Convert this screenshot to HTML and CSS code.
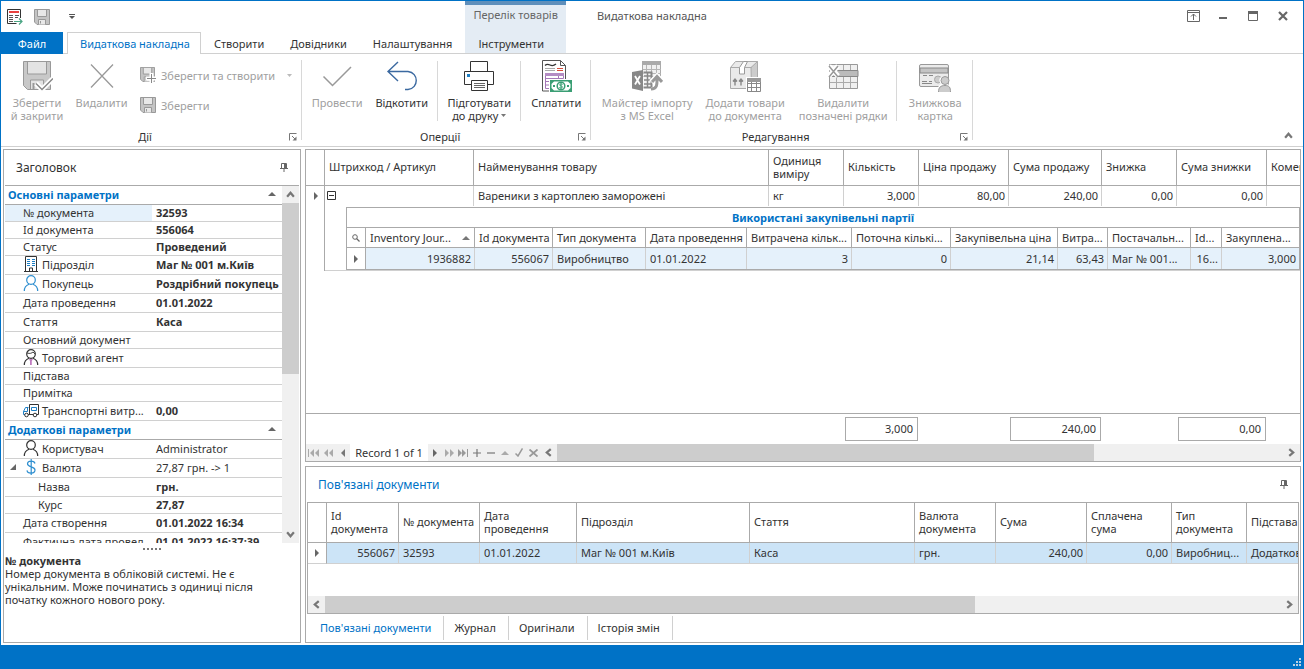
FILE: index.html
```html
<!DOCTYPE html>
<html lang="uk">
<head>
<meta charset="utf-8">
<title>Видаткова накладна</title>
<link rel="stylesheet" href="styles.css">
</head>
<body>
<svg class="sprite" aria-hidden="true">
  <symbol id="i-save" viewBox="0 0 32 32"><path d="M2.500 1.500h27v28h-23l-4-4z" fill="#c8c8c8" stroke="#999"/><path d="M6.500 2v12h19V2" fill="#e3e3e3" stroke="#999"/><path d="M9.500 29v-9h13v9" fill="#e3e3e3" stroke="#999"/><path d="M12.500 23v6" stroke="#999" stroke-width="2"/></symbol>
  <symbol id="i-save-sm" viewBox="0 0 16 16"><path d="M.5.500h15v15H3L.5 13z" fill="#c4c4c4" stroke="#999"/><path d="M3.500 1v6.500h9V1" fill="#e8e8e8" stroke="#999"/><path d="M4.500 15.500v-5h7v5" fill="#e8e8e8" stroke="#999"/><path d="M6.500 12v2.500" stroke="#999"/></symbol>
  <symbol id="i-pin" viewBox="0 0 8 9"><path d="M1.500 5V.5h5V5M0 5.500h8M4 6v3" fill="none" stroke="#666"/><path d="M4 0h2v5H4z" fill="#666"/></symbol>
  <symbol id="i-launch" viewBox="0 0 8 8"><path d="M.5 7.500v-7h7" fill="none" stroke="#777"/><path d="M3 3l3 3" stroke="#777"/><path d="M7.500 3.500v4h-4z" fill="#777"/></symbol>
  <symbol id="i-chev" viewBox="0 0 8 8"><path d="M1 6l3-3.500L7 6" fill="none" stroke="#777" stroke-width="2"/></symbol>
  <symbol id="i-up" viewBox="0 0 8 4"><path d="M0 4l4-4 4 4z" fill="currentColor"/></symbol>
  <symbol id="i-row" viewBox="0 0 4 8"><path d="M0 0l4 4-4 4z" fill="#666"/></symbol>
  <symbol id="i-user" viewBox="0 0 16 16"><circle cx="8" cy="5" r="4.300" fill="none" stroke="currentColor" stroke-width="1.200"/><path d="M1.300 16c0-4.300 2-5.800 4.700-6.800M14.700 16c0-4.300-2-5.800-4.700-6.800" fill="none" stroke="currentColor" stroke-width="1.200"/></symbol>
</svg>

<div class="window">
  <header class="header">
    <div class="quick">
      <button class="q-btn" aria-label="Форма"><svg width="16" height="16" viewBox="0 0 16 16"><path d="M13.500 9V.5H.5v14h9" fill="#fff" stroke="#333"/><path d="M2 2h10v2H2z" fill="#e8423f"/><path d="M2 6.500h4M8 6.500h4M2 8.500h4M8 8.500h3M2 10.500h4M2 12.500h4" stroke="#555"/><path d="M7 12.500h8M12 9.500l3 3-3 3" fill="none" stroke="#4aa583" stroke-width="1.200"/></svg></button>
      <button class="q-btn q-save" aria-label="Зберегти"><svg width="16" height="16"><use href="#i-save-sm"/></svg></button>
      <button class="q-btn q-more" aria-label="Налаштувати панель"><svg width="6" height="5" viewBox="0 0 6 5"><path d="M0 .5h6" stroke="#555"/><path d="M0 2h6L3 5z" fill="#555"/></svg></button>
    </div>
    <div class="ctx-title">Перелік товарів</div>
    <div class="title-right">
      <h1 class="title">Видаткова накладна</h1>
      <div class="win-btns">
        <button aria-label="Параметри стрічки"><svg width="13" height="12" viewBox="0 0 13 12"><path d="M.5.500h12v11H.5zM0 2.500h13M6.500 10V4M4 6.500L6.500 4 9 6.500" fill="none" stroke="#666"/></svg></button>
        <button aria-label="Згорнути"><svg width="8" height="12" viewBox="0 0 8 12"><path d="M0 8h8" stroke="#666" stroke-width="2"/></svg></button>
        <button aria-label="Розгорнути"><svg width="10" height="10" viewBox="0 0 10 10"><path d="M.5.500h9v9h-9z" fill="none" stroke="#666"/><path d="M0 0h10v3H0z" fill="#666"/></svg></button>
        <button aria-label="Закрити"><svg width="10" height="10" viewBox="0 0 10 10"><path d="M1 1l8 8M9 1L1 9" stroke="#666" stroke-width="2.200"/></svg></button>
      </div>
    </div>
    <nav class="tabs">
      <button class="tab tab-file">Файл</button>
      <button class="tab tab-active">Видаткова накладна</button>
      <button class="tab">Створити</button>
      <button class="tab">Довідники</button>
      <button class="tab">Налаштування</button>
    </nav>
    <div class="ctx-tab"><button class="tab">Інструменти</button></div>
    <div class="tabs-rest"></div>
  </header>

  <section class="ribbon">
    <div class="group">
      <div class="group-body group-actions">
        <button class="big w64" disabled><svg width="32" height="32" viewBox="0 0 32 32"><use href="#i-save" width="32" height="32"/><path d="M15 23.500l6 6L32 18.500" fill="none" stroke="#fff" stroke-width="5"/><path d="M15 23.500l6 6L32 18.500" fill="none" stroke="#888" stroke-width="1.500"/></svg><span>Зберегти<br>й закрити</span></button>
        <button class="big w65" disabled><svg width="32" height="32" viewBox="0 0 32 32"><path d="M5 4.500l22 23M27 4.500l-22 23" stroke="#999" stroke-width="1.300"/></svg><span>Видалити</span></button>
        <div class="small-col">
          <button class="small" disabled><svg width="16" height="16" viewBox="0 0 16 16"><use href="#i-save-sm" width="15" height="15"/><path d="M11.500 6v10M6 11.500h10" stroke="#fff" stroke-width="4"/><path d="M11.500 7v9M7 11.500h9" stroke="#888"/></svg><span>Зберегти та створити</span><svg class="drop" width="5" height="3" viewBox="0 0 5 3"><path d="M0 0h5L2.500 3z" fill="#bbb"/></svg></button>
          <button class="small" disabled><svg width="16" height="16"><use href="#i-save-sm"/></svg><span>Зберегти</span></button>
        </div>
      </div>
      <div class="group-foot"><span>Дії</span><button class="launch" aria-label="Дії: параметри"><svg width="8" height="8"><use href="#i-launch"/></svg></button></div>
    </div>

    <div class="group">
      <div class="group-body">
        <button class="big w64" disabled><svg width="32" height="32" viewBox="0 0 32 32"><path d="M2.500 16.500l9 9L30 7" fill="none" stroke="#999" stroke-width="1.500"/></svg><span>Провести</span></button>
        <button class="big w65"><svg width="32" height="32" viewBox="0 0 32 32"><path d="M12 2L2 11.500 12 21M2 11.500h20c11 1 11 17 0 18h-3" fill="none" stroke="#3b69a0" stroke-width="1.400"/></svg><span>Відкотити</span></button>
        <i class="sep"></i>
        <button class="big w76"><svg width="32" height="32" viewBox="0 0 32 32"><g fill="#fff" stroke="#333"><path d="M7.500 12V1.500h17V12"/><path d="M1.500 11.500h29v13h-29z"/><path d="M8.500 20.500h16v10h-16z"/></g><path d="M11 23.500h11M11 25.500h11M11 27.500h11" stroke="#666"/><path d="M4 14h3v3H4z" fill="#1e7fc4"/></svg><span>Підготувати<br>до друку <svg width="5" height="3" viewBox="0 0 5 3"><path d="M0 0h5L2.500 3z" fill="#777"/></svg></span></button>
        <i class="sep"></i>
        <button class="big w64"><svg width="32" height="32" viewBox="0 0 32 32"><path d="M2.500.500h18l5 5V31H2.500z" fill="#fff" stroke="#555"/><path d="M20.500.500v5h5" fill="none" stroke="#555"/><path d="M5 5.500q2-2 5-.5t6-1" fill="none" stroke="#333" stroke-width="1.300"/><path d="M5 8.500h10M5 10.500h10" stroke="#aaa"/><path d="M17 8.500h6M17 10.500h6" stroke="#d94b3c"/><path d="M5.500 14v14.500h4M5 18.500h18.500v-4M18.500 15v3.500" fill="none" stroke="#a678b8"/><path d="M5 13h19v3H5z" fill="#b48cc4"/><path d="M6 21.500h4M6 25h4" stroke="#a678b8"/><path d="M9 19h23v13H9z" fill="#fff"/><path d="M10 20h22v12H10z" fill="#3a9e74"/><path d="M14 21.500h14l2.500 2.500v4L28 30.500H14L11.500 28v-4z" fill="#fff"/><circle cx="21" cy="26" r="3.800" fill="#fff" stroke="#3a9e74" stroke-width="1.500"/><path d="M22.500 24.500c-1-.8-3-.5-3 .5s3 .8 3 1.900-2 1.500-3.200.6M21 23v6" fill="none" stroke="#3a9e74"/><path d="M13 25h2v2h-2zM27 25h2v2h-2z" fill="#3a9e74"/></svg><span>Сплатити</span></button>
      </div>
      <div class="group-foot"><span>Оперції</span><button class="launch" aria-label="Операції: параметри"><svg width="8" height="8"><use href="#i-launch"/></svg></button></div>
    </div>

    <div class="group">
      <div class="group-body group-edit">
        <button class="big w100" disabled><svg width="32" height="32" viewBox="0 0 32 32"><path d="M11.500 1.500h18v15h-18z" fill="#f0f0f0" stroke="#aaa"/><path d="M11 1h19v4H11z" fill="#aaa"/><path d="M15.500 5v11M20.500 5v11M25.500 5v11M12 9.500h18M12 13.500h18" stroke="#b5b5b5"/><path d="M1 12l11-2v21L1 28.500z" fill="#888"/><path d="M4 16l5 8.500M9 16l-5 8.500" stroke="#fff" stroke-width="1.800"/><path d="M12.500 12.500h8v15h-8" fill="#f4f4f4" stroke="#888" stroke-width="2"/><path d="M13 16h7M13 20h7M13 24h7M16.500 13v14" stroke="#888" stroke-width="1.500"/><path d="M20 30c6 0 6-5 6-13M20 22l6-6 6 6" fill="none" stroke="#fff" stroke-width="5"/><path d="M20 29c7 0 6-6 6-12M21 22l5-5.500 5 5.500" fill="none" stroke="#999" stroke-width="3"/></svg><span>Майстер імпорту<br>з MS Excel</span></button>
        <button class="big w96" disabled><svg width="32" height="32" viewBox="0 0 32 32"><path d="M1.500 7.500l5-6h22v20l-6 7h-21z" fill="#eaeaea" stroke="#aaa"/><path d="M22 7.500l6.500-6v20l-6 7z" fill="#ccc" stroke="#aaa"/><path d="M1.500 7.500h21" stroke="#aaa"/><path d="M10.500 14V7.500l4-6h4l-3 6V14z" fill="#fff" stroke="#999"/><path d="M6 25.500v-6M4 21.500l2-2.500 2 2.500M12 25.500v-6M10 21.500l2-2.500 2 2.500" fill="none" stroke="#888" stroke-width="1.400"/><path d="M17 17h15v15H17z" fill="#fff"/><path d="M18.500 18.500h13v13h-13zM19 23.500h12M19 27.500h12M22.500 22v9M27.500 22v9" fill="#fff" stroke="#888"/><path d="M18 18h14v4H18z" fill="#999"/></svg><span>Додати товари<br>до документа</span></button>
        <button class="big w100" disabled><svg width="32" height="32" viewBox="0 0 32 32"><path d="M2.500 4.500h28v24h-28z" fill="#f0f0f0" stroke="#999"/><path d="M9.500 5v23M16.500 5v23M23.500 5v23M3 22.500h27" stroke="#aaa"/><path d="M3 10.500h28v6H3z" fill="#bbb" stroke="#888"/><path d="M2 6l9 10M11 6L2 16" stroke="#fff" stroke-width="5"/><path d="M2 6l9 11M11 6L2 17" stroke="#999" stroke-width="1.500"/></svg><span>Видалити<br>позначені рядки</span></button>
        <i class="sep"></i>
        <button class="big w70" disabled><svg width="32" height="32" viewBox="0 0 32 32"><rect x=".5" y="4.500" width="29" height="22" rx="1.500" fill="#ebebeb" stroke="#999"/><path d="M1 8h28v5H1z" fill="#c4c4c4" stroke="#888"/><path d="M4 15.500h4M10 15.500h4M3 21.500h5M3 23.500h10M10 21.500h3" stroke="#888"/><circle cx="19" cy="19.500" r="3.500" fill="#ccc" stroke="#aaa"/><path d="M18 32c0-6 4-8 4-8-5-6 3-11 7-5 1 3 0 5 0 5s3 2 3 8z" fill="#fff"/><circle cx="26" cy="20.500" r="4" fill="#ccc" stroke="#999"/><path d="M19.500 32c0-4.500 2-6.500 6.500-6.500s5.500 2 5.500 6.500" fill="#ccc" stroke="#999"/></svg><span>Знижкова<br>картка</span></button>
      </div>
      <div class="group-foot"><span>Редагування</span><button class="launch" aria-label="Редагування: параметри"><svg width="8" height="8"><use href="#i-launch"/></svg></button></div>
    </div>
    <button class="collapse" aria-label="Згорнути стрічку"><svg width="9" height="9"><use href="#i-chev"/></svg></button>
  </section>

  <main class="work">
    <aside class="panel props">
      <div class="panel-head"><h2>Заголовок</h2><button class="pin" aria-label="Закріпити"><svg width="8" height="9"><use href="#i-pin"/></svg></button></div>
      <div class="props-body">
        <div class="props-list">
          <table class="ptable">
            <colgroup><col class="c-name"><col></colgroup>
            <tr class="cat"><th colspan="2"><div>Основні параметри<svg width="8" height="4"><use href="#i-up"/></svg></div></th></tr>
            <tr class="r17 sel"><th>№ документа</th><td>32593</td></tr>
            <tr class="r17"><th>Id документа</th><td>556064</td></tr>
            <tr class="r17"><th>Статус</th><td>Проведений</td></tr>
            <tr><th><div><svg width="16" height="16" viewBox="0 0 16 16"><path d="M2.500.500h11v15h-11zM1 15.500h14M6.500 15v-3h3v3" fill="none" stroke="#333"/><path d="M4 3.500h3M9 3.500h3M4 5.500h3M9 5.500h3M4 7.500h3M9 7.500h3M4 9.500h3M9 9.500h3" stroke="#1e7fc4"/></svg>Підрозділ</div></th><td>Маг № 001 м.Київ</td></tr>
            <tr><th><div><svg class="blue" width="16" height="16"><use href="#i-user"/></svg>Покупець</div></th><td>Роздрібний покупець</td></tr>
            <tr><th>Дата проведення</th><td>01.01.2022</td></tr>
            <tr><th>Стаття</th><td>Каса</td></tr>
            <tr class="r17"><th>Основний документ</th><td></td></tr>
            <tr><th><div><svg width="16" height="16" viewBox="0 0 16 16"><use href="#i-user" width="16" height="16"/><path d="M4 4c3 1 5 0 6-1l2 2" fill="none" stroke="#444"/><path d="M6 10h4l-1.200 2v4H7v-4z" fill="#c07cc0"/></svg>Торговий агент</div></th><td></td></tr>
            <tr class="r17"><th>Підстава</th><td></td></tr>
            <tr class="r17"><th>Примітка</th><td></td></tr>
            <tr><th><div><svg width="16" height="16" viewBox="0 0 16 16"><path d="M6.500 12V2.500h9v10h-2" fill="none" stroke="#333"/><path d="M5.500 5.500h-3l-2 4v3h2M.5 9.500h4v-4M8.500 5.500h5v3h-5z" fill="none" stroke="#1e7fc4"/><path d="M5 12.500h5" stroke="#333"/><circle cx="3.500" cy="13" r="1.800" fill="#fff" stroke="#333"/><circle cx="12" cy="13" r="1.800" fill="#fff" stroke="#333"/></svg>Транспортні витр...</div></th><td>0,00</td></tr>
            <tr class="cat"><th colspan="2"><div>Додаткові параметри<svg width="8" height="4"><use href="#i-up"/></svg></div></th></tr>
            <tr><th><div><svg width="16" height="16"><use href="#i-user"/></svg>Користувач</div></th><td class="plain">Administrator</td></tr>
            <tr class="tree"><th><div><svg width="6" height="6" viewBox="0 0 6 6"><path d="M6 0v6H0z" fill="#666"/></svg><svg width="16" height="16" viewBox="0 0 16 16"><path d="M12 4.500C11 1 4.500 1.500 4.500 4.800c0 4 7.500 2 7.500 6.200 0 4-7.500 4-8 .3M8.200 0v16" fill="none" stroke="#2f8fd0" stroke-width="1.200"/></svg>Валюта</div></th><td class="plain">27,87 грн. -&gt; 1</td></tr>
            <tr class="child"><th>Назва</th><td>грн.</td></tr>
            <tr class="r17 child"><th>Курс</th><td>27,87</td></tr>
            <tr><th>Дата створення</th><td>01.01.2022 16:34</td></tr>
            <tr><th>Фактична дата провед...</th><td>01.01.2022 16:37:39</td></tr>
          </table>
        </div>
        <div class="vscroll"><svg width="9" height="9"><use href="#i-chev"/></svg><i></i><svg class="down" width="9" height="9"><use href="#i-chev"/></svg></div>
      </div>
      <div class="splitter"><i></i><i></i><i></i><i></i><i></i></div>
      <div class="hint"><b>№ документа</b><p>Номер документа в обліковій системі. Не є унікальним. Може починатись з одиниці після початку кожного нового року.</p></div>
    </aside>

    <div class="right">
      <section class="panel goods">
        <div class="goods-body">
          <table class="grid main-grid">
            <colgroup><col class="w19"><col class="w149"><col class="w295"><col class="w75"><col class="w75"><col class="w90"><col class="w93"><col class="w75"><col class="w90"><col></colgroup>
            <thead><tr><th></th><th>Штрихкод / Артикул</th><th>Найменування товару</th><th>Одиниця виміру</th><th>Кількість</th><th>Ціна продажу</th><th>Сума продажу</th><th>Знижка</th><th>Сума знижки</th><th>Коментар</th></tr></thead>
            <tbody>
              <tr><td rowspan="2" class="ind"><svg width="4" height="8"><use href="#i-row"/></svg></td><td class="exp"><button aria-label="Згорнути рядок"><svg width="9" height="9" viewBox="0 0 9 9"><path d="M.5.500h8v8h-8zM2 4.500h5" fill="none" stroke="#333"/></svg></button></td><td>Вареники з картоплею заморожені</td><td>кг</td><td class="num">3,000</td><td class="num">80,00</td><td class="num">240,00</td><td class="num">0,00</td><td class="num">0,00</td><td></td></tr>
              <tr><td colspan="9" class="nest">
                <table class="grid sub-grid">
                  <caption>Використані закупівельні партії</caption>
                  <colgroup><col class="w19"><col class="w109"><col class="w78"><col class="w93"><col class="w101"><col class="w105"><col class="w99"><col class="w107"><col class="w50"><col class="w83"><col class="w31"><col></colgroup>
                  <thead><tr><th class="center"><svg width="8" height="8" viewBox="0 0 8 8"><circle cx="3" cy="3" r="2.300" fill="none" stroke="#666"/><path d="M4.500 4.500l3 3" stroke="#666" stroke-width="1.300"/></svg></th><th><div class="sort">Inventory Jour...<svg width="8" height="4"><use href="#i-up"/></svg></div></th><th>Id документа</th><th>Тип документа</th><th>Дата проведення</th><th>Витрачена кільк...</th><th>Поточна кількі...</th><th>Закупівельна ціна</th><th>Витра...</th><th>Постачальн...</th><th>Id...</th><th>Закуплена...</th></tr></thead>
                  <tbody><tr><td class="center"><svg width="4" height="8"><use href="#i-row"/></svg></td><td class="num">1936882</td><td class="num">556067</td><td>Виробництво</td><td>01.01.2022</td><td class="num">3</td><td class="num">0</td><td class="num">21,14</td><td class="num">63,43</td><td>Маг № 001...</td><td class="num">16...</td><td class="num">3,000</td></tr></tbody>
                </table>
              </td></tr>
            </tbody>
          </table>
        </div>
        <div class="totals"><output class="t-qty">3,000</output><output class="t-sum">240,00</output><output class="t-disc">0,00</output></div>
        <div class="nav">
          <div class="nav-l">
            <button aria-label="Перший"><svg width="11" height="8" viewBox="0 0 11 8"><path d="M.5 0v8" stroke="#aaa"/><path d="M6 0v8L2 4zM11 0v8L7 4z" fill="#aaa"/></svg></button>
            <button aria-label="Попередня сторінка"><svg width="9" height="8" viewBox="0 0 9 8"><path d="M4 0v8L0 4zM9 0v8L5 4z" fill="#aaa"/></svg></button>
            <button aria-label="Попередній"><svg width="4" height="8" viewBox="0 0 4 8"><path d="M4 0v8L0 4z" fill="#777"/></svg></button>
          </div>
          <span class="rec">Record 1 of 1</span>
          <div class="nav-r">
            <button aria-label="Наступний"><svg width="4" height="8"><use href="#i-row"/></svg></button>
            <button aria-label="Наступна сторінка"><svg width="9" height="8" viewBox="0 0 9 8"><path d="M0 0v8l4-4zM5 0v8l4-4z" fill="#aaa"/></svg></button>
            <button aria-label="Останній"><svg width="10" height="8" viewBox="0 0 10 8"><path d="M9.500 0v8" stroke="#999"/><path d="M0 0v8l4-4zM4 0v8l4-4z" fill="#999"/></svg></button>
            <button aria-label="Додати"><svg width="8" height="8" viewBox="0 0 8 8"><path d="M0 4h8M4 0v8" stroke="#777" stroke-width="1.200"/></svg></button>
            <button aria-label="Вилучити"><svg width="8" height="8" viewBox="0 0 8 8"><path d="M0 4h8" stroke="#777" stroke-width="1.200"/></svg></button>
            <button class="dim" aria-label="Редагувати"><svg width="8" height="4"><use href="#i-up"/></svg></button>
            <button aria-label="Підтвердити"><svg width="8" height="9" viewBox="0 0 8 9"><path d="M.5 5.500L3 8l4.500-7.500" fill="none" stroke="#999" stroke-width="1.500"/></svg></button>
            <button aria-label="Скасувати"><svg width="9" height="8" viewBox="0 0 9 8"><path d="M.5.500l8 7M8.500.500l-8 7" stroke="#999" stroke-width="1.800"/></svg></button>
          </div>
          <div class="hscroll top-scroll"><svg class="left" width="9" height="9"><use href="#i-chev"/></svg><span class="track"><i></i></span><svg class="rt" width="9" height="9"><use href="#i-chev"/></svg></div>
        </div>
      </section>

      <section class="panel linked">
        <div class="panel-head linked-head"><h2>Пов'язані документи</h2><button class="pin" aria-label="Закріпити"><svg width="8" height="9"><use href="#i-pin"/></svg></button></div>
        <div class="linked-box">
          <div class="linked-body">
            <table class="grid linked-grid">
              <colgroup><col class="w19"><col class="w72"><col class="w81"><col class="w97"><col class="w173"><col class="w165"><col class="w81"><col class="w91"><col class="w85"><col class="w75"><col></colgroup>
              <thead><tr><th></th><th>Id документа</th><th>№ документа</th><th>Дата проведення</th><th>Підрозділ</th><th>Стаття</th><th>Валюта документа</th><th>Сума</th><th>Сплачена сума</th><th>Тип документа</th><th>Підстава</th></tr></thead>
              <tbody><tr><td class="center"><svg width="4" height="8"><use href="#i-row"/></svg></td><td class="num">556067</td><td>32593</td><td>01.01.2022</td><td>Маг № 001 м.Київ</td><td>Каса</td><td>грн.</td><td class="num">240,00</td><td class="num">0,00</td><td>Виробниц...</td><td>Додаткові</td></tr></tbody>
            </table>
          </div>
          <div class="hscroll low-scroll"><svg class="left" width="9" height="9"><use href="#i-chev"/></svg><span class="track"><i></i></span><svg class="rt" width="9" height="9"><use href="#i-chev"/></svg></div>
        </div>
        <nav class="btabs"><button class="on">Пов'язані документи</button><button>Журнал</button><button>Оригінали</button><button>Історія змін</button></nav>
      </section>
    </div>
  </main>

  <footer class="status"><svg width="8" height="8" viewBox="0 0 8 8"><path d="M6 0h2v2H6zM3 3h2v2H3zM6 3h2v2H6zM0 6h2v2H0zM3 6h2v2H3zM6 6h2v2H6z" fill="#b9cfe4"/></svg></footer>
</div>
</body>
</html>
```

FILE: styles.css
```css
* { box-sizing: border-box; }
html, body { height: 100%; margin: 0; }
body { font: 11px/13px "Noto Sans", "Open Sans", sans-serif; color: #333; background: #fff; overflow: hidden; }
h1, h2, p { margin: 0; font-weight: 400; }
button { font: inherit; color: inherit; background: none; border: 0; padding: 0; margin: 0; }
svg { flex: none; }
.sprite { display: none; }

.window { height: 100vh; display: flex; flex-direction: column; border: 1px solid #0072c6; border-bottom: 0; }

/* header */
.header { display: grid; grid-template-columns: auto auto 1fr; grid-template-rows: 31px 22px; }
.quick { display: flex; align-items: center; padding-left: 6px; }
.q-btn { display: flex; }
.q-save { margin-left: 11px; }
.q-more { margin-left: 19px; }
.ctx-title { background: #e4ecf4; border-top: 4px solid #5f8fbb; padding: 3px 8px 0; color: #666; white-space: nowrap; }
.title-right { display: flex; align-items: center; justify-content: space-between; padding: 0 5px 2px 31px; }
.title { font-size: 11px; color: #555; }
.win-btns { display: flex; }
.win-btns button { width: 30px; height: 29px; display: flex; align-items: center; justify-content: center; }
.tabs { display: flex; border-bottom: 1px solid #d0d0d0; }
.tab { padding: 2px 13px 0; white-space: nowrap; }
.tab-file { background: #0072c6; color: #fff; width: 62px; margin: 0 4px -1px 0; padding-top: 0; }
.tab-active { color: #0072c6; background: #fff; border: 1px solid #d0d0d0; border-bottom: 0; padding: 0 10px 0 12px; margin-bottom: -1px; }
.ctx-tab { background: #e4ecf4; border-bottom: 1px solid #d0d0d0; display: flex; }
.tabs-rest { border-bottom: 1px solid #d0d0d0; }

/* ribbon */
.ribbon { display: flex; height: 93px; border-bottom: 1px solid #d0d0d0; }
.group { display: flex; flex-direction: column; justify-content: space-between; margin: 6px 0; border-right: 1px solid #d8d8d8; }
.group-body { display: flex; padding: 0 2px 0 3px; }
.group-actions { padding: 0 2px 0 4px; }
.group-edit { padding: 0 2px 0 6px; }
.big { display: flex; flex-direction: column; align-items: center; line-height: 13px; gap: 4px; white-space: nowrap; }
.big:disabled, .small:disabled { color: #a0a0a0; }
.big span svg { vertical-align: 3px; }
.sep { width: 1px; height: 60px; margin: 1px 3px 0; background: #d8d8d8; }
.w64 { width: 64px; } .w65 { width: 65px; } .w70 { width: 70px; } .w76 { width: 76px; } .w96 { width: 96px; } .w100 { width: 100px; }
.small-col { display: flex; flex-direction: column; gap: 14px; padding: 7px 7px 0 6px; }
.small { display: flex; align-items: center; gap: 5px; height: 16px; white-space: nowrap; }
.drop { margin-left: 7px; }
.group-foot { display: flex; align-items: center; height: 7px; padding: 0 4px 0 0; text-align: center; }
.group-foot span { flex: 1; }
.launch { display: flex; }
.collapse { margin: auto 10px 6px auto; display: flex; }

/* work area */
.work { flex: 1; min-height: 0; display: flex; gap: 4px; padding: 2px; }
.panel { border: 1px solid #aaa; }
.props { width: 298px; flex: none; display: flex; flex-direction: column; }
.panel-head { display: flex; align-items: center; justify-content: space-between; height: 35px; padding: 0 12px; }
.panel-head h2 { font-size: 12px; }
.pin { display: flex; }
.props-body { flex: 1; min-height: 0; display: flex; margin: 0 1px; border-top: 1px solid #aaa; }
.props-list { flex: 1; overflow: hidden; }
.ptable { width: 100%; table-layout: fixed; border-collapse: separate; border-spacing: 0; }
.c-name { width: 147px; }
.ptable tr { height: 19px; }
.ptable .r17 { height: 17px; }
.ptable th, .ptable td { padding: 0 0 2px 18px; text-align: left; font-weight: 400; border-bottom: 1px solid #d0d0d0; white-space: nowrap; overflow: hidden; line-height: 13px; }
.ptable td { padding-left: 4px; font-weight: 700; }
.ptable td.plain { font-weight: 400; }
.ptable th div { display: flex; align-items: center; gap: 3px; height: 16px; }
.ptable .cat th { padding: 0 6px 2px 3px; color: #0072c6; font-weight: 700; border-color: #aaa; }
.cat div { justify-content: space-between; }
.cat svg { color: #666; }
.ptable .sel th { background: #e5f1fb; }
.ptable .tree th { padding-left: 5px; }
.ptable .tree th div svg + svg { margin-left: 4px; }
.ptable .child th { padding-left: 33px; }
.blue { color: #2f8fd0; }
.vscroll { width: 17px; background: #f0f0f0; display: flex; flex-direction: column; align-items: center; padding: 4px 0; gap: 4px; }
.vscroll i { width: 17px; flex: 0 0 49%; background: #cdcdcd; }
.vscroll .down { margin-top: auto; transform: rotate(180deg); }
.splitter { display: flex; justify-content: center; align-items: center; gap: 2px; height: 11px; }
.splitter i { width: 2px; height: 2px; background: #777; }
.hint { height: 88px; padding: 0 20px 0 1px; }

.right { flex: 1; min-width: 0; display: flex; flex-direction: column; gap: 4px; }
.goods { flex: 1; display: flex; flex-direction: column; min-height: 0; }
.goods-body { flex: 1; overflow: hidden; }
.grid { width: 100%; table-layout: fixed; border-collapse: separate; border-spacing: 0; }
.grid th, .grid td { padding: 0 4px 2px; text-align: left; font-weight: 400; overflow: hidden; border-right: 1px solid #aaa; white-space: nowrap; line-height: 13px; }
.grid th { border-bottom: 1px solid #aaa; }
.main-grid > thead th, .linked-grid th { white-space: normal; }
.grid td { border-right-color: #d0d0d0; }
.grid th:last-child, .grid td:last-child { border-right: 0; }
.grid td.num { text-align: right; padding: 0 3px 2px; }
.grid.sub-grid th, .grid.sub-grid td { padding-bottom: 0; }
.grid .center { text-align: center; padding: 0; }
.grid .center svg { display: block; margin: auto; }
.w19 { width: 19px; } .w31 { width: 31px; } .w50 { width: 50px; } .w72 { width: 72px; } .w75 { width: 75px; }
.w78 { width: 78px; } .w81 { width: 81px; } .w83 { width: 83px; } .w85 { width: 85px; } .w90 { width: 90px; }
.w91 { width: 91px; } .w93 { width: 93px; } .w97 { width: 97px; } .w99 { width: 99px; } .w101 { width: 101px; }
.w105 { width: 105px; } .w107 { width: 107px; } .w109 { width: 109px; } .w149 { width: 149px; } .w165 { width: 165px; }
.w173 { width: 173px; } .w295 { width: 295px; }
.main-grid > thead > tr { height: 36px; }
.main-grid > tbody > tr { height: 20px; }
.grid td.ind { vertical-align: top; padding: 6px 0 0 8px; border-right-color: #aaa; }
.ind svg, .exp svg { display: block; }
.grid .exp { padding: 0 0 2px 2px; }
.exp button { display: block; }
.main-grid td.nest { padding: 1px 0 0 21px; border-bottom: 1px solid #d0d0d0; }
.sub-grid { border: 1px solid #aaa; border-top: 0; }
.sub-grid caption { height: 21px; border: 1px solid #aaa; line-height: 20px; color: #0072c6; font-weight: 700; }
.sub-grid thead tr { height: 20px; }
.sub-grid tbody tr { height: 21px; }
.sub-grid tbody td { background: #e5f1fb; }
.sub-grid tbody td.center, .linked-grid tbody td.center { background: #fff; border-right-color: #aaa; }
.sort { display: flex; align-items: center; justify-content: space-between; }
.sort svg { color: #777; }

.totals { display: grid; grid-template-columns: 73px 92px 91px 77px 88px; padding: 3px 34px 3px 539px; border-top: 1px solid #aaa; }
.totals output { border: 1px solid #aaa; height: 24px; line-height: 22px; text-align: right; padding-right: 4px; }
.t-sum { grid-column: 3; }
.t-disc { grid-column: 5; }

.nav { display: flex; height: 17px; background: #f0f0f0; }
.nav-l, .nav-r { display: flex; }
.nav-l { width: 44px; }
.nav button { width: 14px; display: flex; align-items: center; justify-content: center; }
.nav .nav-l button { flex: 1; }
.dim { color: #aaa; }
.rec { background: #fff; width: 78px; text-align: center; line-height: 17px; white-space: nowrap; }
.hscroll { flex: 1; display: flex; align-items: center; height: 17px; background: #f0f0f0; padding: 0 4px; gap: 4px; }
.hscroll .left { transform: rotate(-90deg); }
.hscroll .rt { transform: rotate(90deg); }
.track { flex: 1; height: 17px; }
.track i { display: block; height: 17px; width: 74%; background: #cdcdcd; }

.linked { height: 177px; display: flex; flex-direction: column; }
.linked-head h2 { color: #0072c6; }
.linked-box { margin: 0 1px; border: 1px solid #aaa; flex: 1; display: flex; flex-direction: column; }
.linked-body { flex: 1; overflow: hidden; }
.linked-grid thead tr { height: 40px; }
.linked-grid tbody tr { height: 21px; }
.linked-grid tbody td { background: #cce4f7; border-bottom: 1px solid #d0d0d0; }
.low-scroll { flex: none; }
.low-scroll .track i { width: 68%; }
.btabs { display: flex; height: 28px; padding: 2px; }
.btabs button { padding: 0 12px 2px 10px; border-right: 1px solid #d0d0d0; }
.btabs .on { color: #0072c6; padding-left: 12px; }

.status { height: 24px; flex: none; background: #0072c6; display: flex; justify-content: flex-end; align-items: flex-end; padding: 3px 2px; }
```
